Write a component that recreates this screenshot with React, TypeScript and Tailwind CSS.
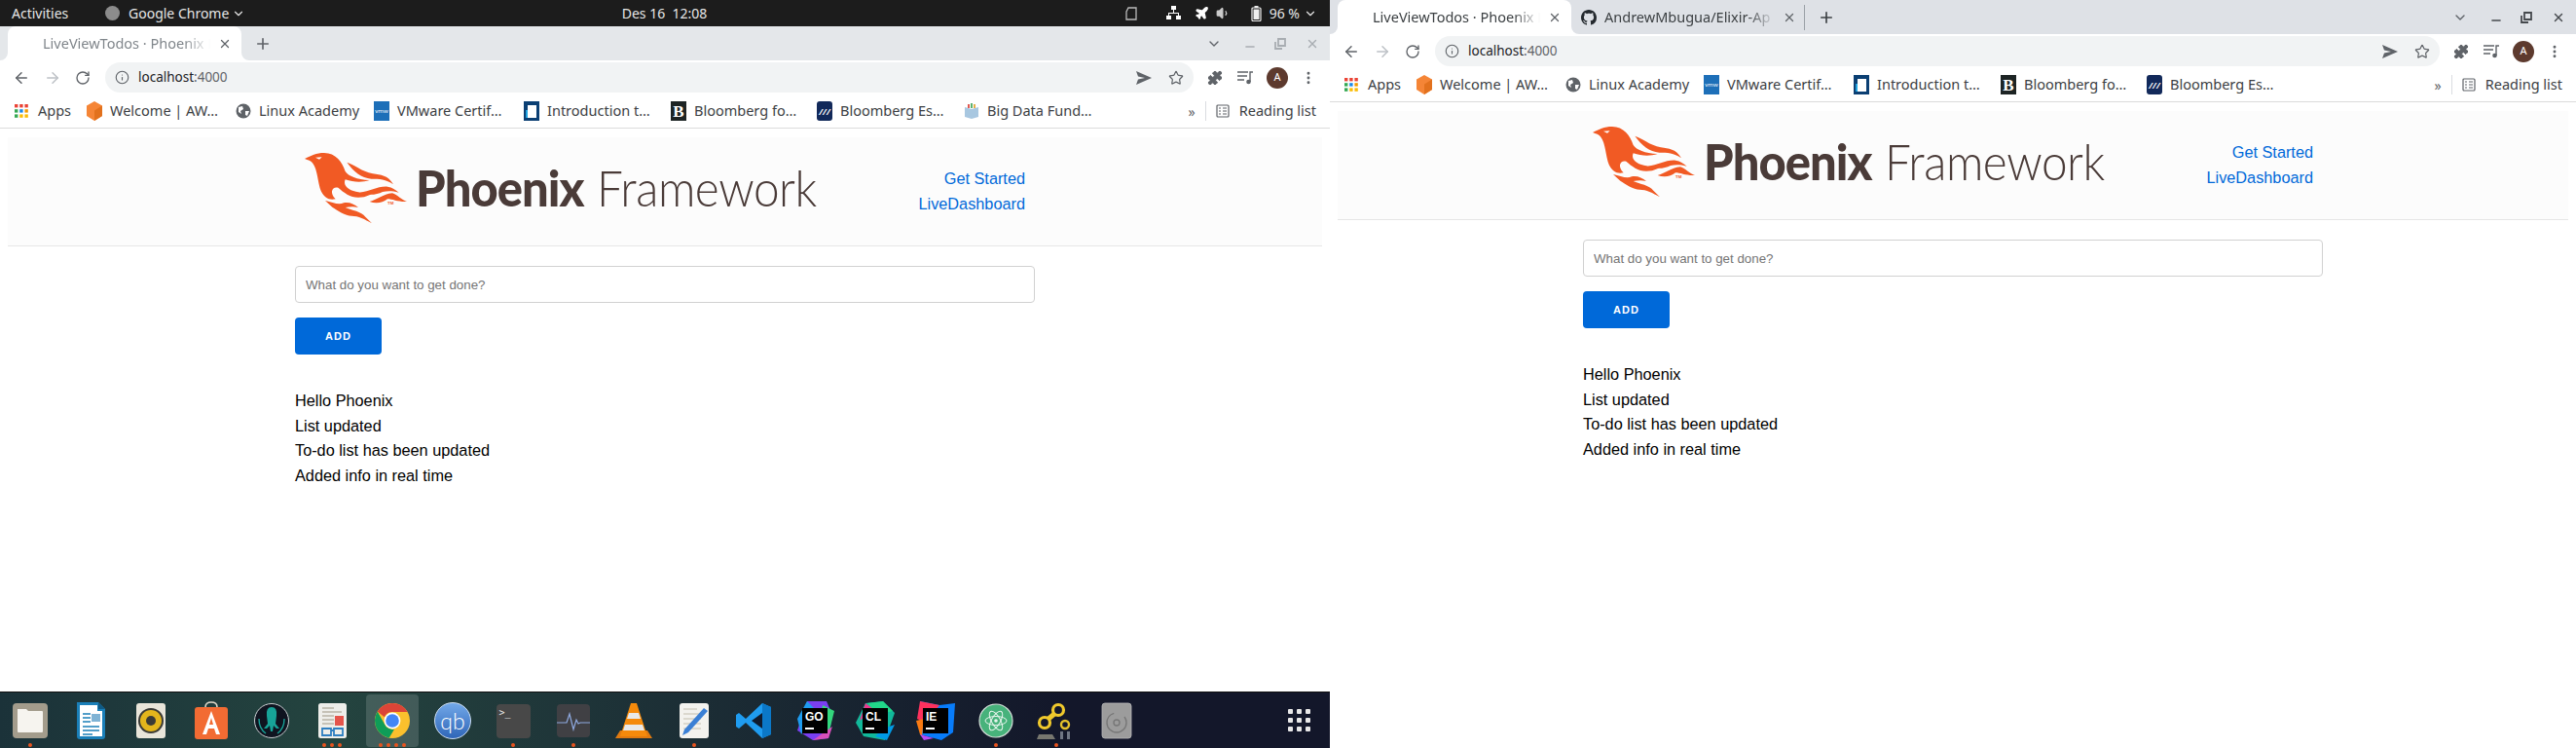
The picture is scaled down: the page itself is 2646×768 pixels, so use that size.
import React from 'react';
import { ArrowLeft, ArrowRight, RotateCw, Info, Star, Plus, X, ChevronDown, Minus, EllipsisVertical, Puzzle, Plane, Volume1 } from 'lucide-react';

const AppsGrid = () => (
  <svg width="14" height="14" viewBox="0 0 14 14" className="shrink-0">
    {['#ea4335', '#ea4335', '#ea4335', '#34a853', '#1a88e8', '#f29900', '#34a853', '#fbbc04', '#fbbc04'].map((c, i) => (
      <rect key={i} x={(i % 3) * 5.2} y={Math.floor(i / 3) * 5.2} width="3.4" height="3.4" fill={c} />
    ))}
  </svg>
);

const HexIcon = () => (
  <svg width="16" height="20" viewBox="0 0 16 20" className="shrink-0">
    <path d="M8 0 16 4.5V15L8 20 0 15V4.5Z" fill="#f58536" />
    <path d="M8 9.5 16 4.5V15L8 20Z" fill="#e2711d" />
  </svg>
);

const GlobeIcon = () => (
  <svg width="16" height="16" viewBox="0 0 16 16" className="shrink-0">
    <circle cx="8" cy="8" r="7.5" fill="#5f6368" />
    <path d="M3 4 7 3 8 6 5 8 6 11 3 9ZM10 8 14 8 12 13 10 12Z" fill="#fff" />
  </svg>
);

const VmwIcon = () => (
  <div className="w-4 h-5 shrink-0 bg-[#1d6fb8] flex items-center justify-center text-[6px] leading-none text-white">vmw</div>
);

const IntroIcon = () => (
  <svg width="16" height="20" viewBox="0 0 16 20" className="shrink-0">
    <rect width="16" height="20" fill="#0b3f73" />
    <path d="M4 4h9v13H2V9h2Z" fill="#fff" />
    <path d="M2 9h2v8H2Z" fill="#1fa3e0" />
  </svg>
);

const BIcon = () => (
  <div className="w-4 h-5 shrink-0 bg-[#1d2424] flex items-center justify-center text-[17px] leading-none font-bold text-white font-['Liberation_Serif',serif]">B</div>
);

const EsIcon = () => (
  <div className="w-4 h-5 shrink-0 rounded-[3px] bg-[#12295a] flex items-center justify-center text-[9px] leading-none italic font-bold text-white">///</div>
);

const BookIcon = () => (
  <svg width="16" height="18" viewBox="0 0 16 18" className="shrink-0">
    <path d="M1 5 8 7 15 5V15L8 17 1 15Z" fill="#a8c7e0" />
    <rect x="4" y="2" width="2" height="4" fill="#e0574f" />
    <rect x="7" y="1" width="2" height="5" fill="#5cb270" />
    <rect x="10" y="2" width="2" height="4" fill="#e6b04a" />
  </svg>
);

const PhoenixBird = () => (
  <svg viewBox="25 25 315 225" className="w-[105px] h-[75px] shrink-0">
    <g fill="#f15a24">
      <path d="M25 46C45 36 60 28 85 28 120 28 140 55 150 85 160 100 185 110 225 112 200 120 175 118 150 110 143 125 155 140 175 145 205 155 230 150 255 135 235 155 215 165 190 165 165 165 145 150 128 135 110 130 100 150 120 170 100 175 85 165 75 145 65 120 65 80 50 60 45 52 35 50 25 46Z" />
      <path d="M155 57C175 62 200 85 235 92 260 97 280 95 298 125 275 108 255 108 230 108 200 105 175 85 155 57Z" />
      <path d="M195 150C225 147 250 130 280 132 295 134 305 142 315 150 295 145 280 145 265 148 245 158 220 160 195 150Z" />
      <path d="M225 178C250 172 265 155 295 152 310 156 325 175 340 178 315 180 295 170 280 170 265 182 245 185 225 178Z" />
      <path d="M88 175C110 180 130 190 145 182 160 178 178 185 190 196 175 192 162 194 150 196 170 205 200 208 212 225L232 245C210 232 190 222 170 222 150 222 125 205 110 195Z" />
    </g>
    <path d="M58 42 78 41 70 48Z" fill="#fff" />
    <text x="280" y="186" fontSize="13" fontWeight="700" fill="#f15a24" fontFamily="Liberation Sans, sans-serif">TM</text>
  </svg>
);

const PhoenixPage = () => (
  <div className="flex-1 bg-white px-2 pt-[9px] font-['Liberation_Sans',sans-serif] text-[16.3px] leading-[25.6px] text-black">
    <div className="h-[112px] bg-[#fcfcfc] border-b border-[#e6e6e6]">
      <div className="w-[760px] mx-auto px-[10px] h-full flex items-center justify-between">
        <div className="flex items-center pb-[6px]">
          <PhoenixBird />
          <div className="ml-[9px] mb-[3px] flex items-baseline gap-[14px] font-['Lato',sans-serif] text-[52px] leading-none text-[#4a3b38]">
            <span className="font-black tracking-[-1px] scale-x-[0.94] origin-left w-[172px]">Phoenix</span>
            <span className="font-light tracking-[-0.5px] scale-x-[0.918] origin-left w-[223px]">Framework</span>
          </div>
        </div>
        <div className="flex flex-col items-end text-[#0069d9] pt-[1px]">
          <a>Get Started</a>
          <a>LiveDashboard</a>
        </div>
      </div>
    </div>
    <div className="w-[760px] mx-auto pt-5">
      <input
        className="block w-full h-[38px] px-[10px] border border-[#d1d1d1] rounded-[4px] text-[13.33px] placeholder:text-[#757575] outline-none"
        placeholder="What do you want to get done?"
      />
      <button className="mt-[15px] w-[89px] h-[38px] rounded-[4px] bg-[#0069d9] text-white text-[11px] font-bold tracking-[1px] leading-[38px]">ADD</button>
      <ul className="mt-[35px]">
        <li>Hello Phoenix</li>
        <li>List updated</li>
        <li>To-do list has been updated</li>
        <li>Added info in real time</li>
      </ul>
    </div>
  </div>
);

const TabTitle = ({ title, dim }: { title: string; dim?: boolean }) => (
  <span className={`flex-1 min-w-0 whitespace-nowrap text-[14.5px] [mask-image:linear-gradient(to_right,black_84%,transparent)] ${dim ? 'text-[#80868b]' : 'text-[#3c4043]'}`}>{title}</span>
);

const Bookmark = ({ icon, label, width }: { icon: React.ReactNode; label: string; width: string }) => (
  <div className={`flex items-center gap-2 shrink-0 ${width}`}>
    <div className="w-4 flex justify-center">{icon}</div>
    <span className="whitespace-nowrap">{label}</span>
  </div>
);

const WindowControls = ({ dim }: { dim?: boolean }) => (
  <div className={`flex items-center h-full ${dim ? 'text-[#a8adb2]' : 'text-[#45494d]'}`}>
    <ChevronDown size={16} strokeWidth={2} className="mr-[22px] text-[#5f6368]" />
    <Minus size={14} strokeWidth={2.5} className="mr-[18px] mt-[6px]" />
    <svg width="12" height="12" viewBox="0 0 12 12" fill="none" stroke="currentColor" strokeWidth="1.8" className="mr-[20px]">
      <path d="M1 4v7h7M4 1h7v7H4Z" />
    </svg>
    <X size={14} strokeWidth={2.5} className="mr-[11px]" />
  </div>
);

const ChromeBars = ({ focused, bookmarks }: { focused: boolean; bookmarks: React.ReactNode }) => {
  const strip = focused ? 'bg-[#dee1e6]' : 'bg-[#e4e7ea]';
  return (
    <div className="shrink-0 font-['Noto_Sans',sans-serif]">
      <div className="h-[35px] flex bg-white">
        <div className={`w-2 rounded-br-[8px] ${strip}`} />
        <div className={strip}>
          <div className="w-[240px] h-full bg-white rounded-t-[8px] flex items-center pl-[36px] pr-[10px] gap-2">
            <TabTitle title="LiveViewTodos · Phoenix F" dim={!focused} />
            <X size={14} strokeWidth={2.2} className="text-[#5f6368] shrink-0" />
          </div>
        </div>
        <div className={`flex-1 flex items-center justify-between rounded-bl-[8px] ${strip}`}>
          <div className="flex items-center">
            {focused && (
              <div className="w-[240px] flex items-center pl-[10px] pr-[8px] gap-[8px] border-r border-[#9aa0a6] h-[26px]">
                <svg width="16" height="16" viewBox="0 0 16 16" fill="#24292e" className="shrink-0">
                  <path d="M8 0C3.58 0 0 3.58 0 8c0 3.54 2.29 6.53 5.47 7.59.4.07.55-.17.55-.38 0-.19-.01-.82-.01-1.49-2.01.37-2.53-.49-2.69-.94-.09-.23-.48-.94-.82-1.13-.28-.15-.68-.52-.01-.53.63-.01 1.08.58 1.23.82.72 1.21 1.87.87 2.33.66.07-.52.28-.87.51-1.07-1.78-.2-3.64-.89-3.64-3.95 0-.87.31-1.59.82-2.15-.08-.2-.36-1.02.08-2.12 0 0 .67-.21 2.2.82.64-.18 1.32-.27 2-.27s1.36.09 2 .27c1.53-1.04 2.2-.82 2.2-.82.44 1.1.16 1.92.08 2.12.51.56.82 1.27.82 2.15 0 3.07-1.87 3.75-3.65 3.95.29.25.54.73.54 1.48 0 1.07-.01 1.93-.01 2.2 0 .21.15.46.55.38A8.01 8.01 0 0 0 16 8c0-4.42-3.58-8-8-8Z" />
                </svg>
                <TabTitle title="AndrewMbugua/Elixir-Ap" />
                <X size={14} strokeWidth={2.2} className="text-[#5f6368] shrink-0" />
              </div>
            )}
            <Plus size={18} strokeWidth={2.2} className={`text-[#3c4043] ${focused ? 'ml-[13px]' : 'ml-[13px] text-[#5f6368]'}`} />
          </div>
          <WindowControls dim={!focused} />
        </div>
      </div>
      <div className="h-[35px] bg-white flex items-center text-[#5f6368]">
        <ArrowLeft size={18} strokeWidth={2} className="ml-[13px]" />
        <ArrowRight size={18} strokeWidth={2} className="ml-[14px] text-[#bdc1c6]" />
        <RotateCw size={16} strokeWidth={2} className="ml-[14px]" />
        <div className="flex-1 h-[31px] ml-[15px] mr-[14px] rounded-full bg-[#f1f3f4] flex items-center pl-[10px] pr-[10px]">
          <Info size={15} strokeWidth={1.8} />
          <span className="ml-[9px] text-[13.5px]"><span className="text-[#202124]">localhost</span>:4000</span>
          <svg width="16" height="14" viewBox="0 0 16 14" fill="currentColor" className="ml-auto"><path d="M0 0 16 7 0 14 2 8.5 9 7 2 5.5Z" /></svg>
          <Star size={16} strokeWidth={1.8} className="ml-[17px]" />
        </div>
        <Puzzle size={16} fill="currentColor" strokeWidth={1.5} className="mr-[15px]" />
        <svg width="17" height="14" viewBox="0 0 17 14" fill="none" stroke="currentColor" strokeWidth="1.4" className="mr-[13px]">
          <path d="M0 1h11M0 5h10M0 9h7M13 11V1h3" />
          <circle cx="11.5" cy="11" r="1.6" fill="currentColor" />
        </svg>
        <div className="w-[22px] h-[22px] rounded-full bg-[#5d3a2e] text-white text-[11px] flex items-center justify-center mr-[13px]">A</div>
        <EllipsisVertical size={16} strokeWidth={2.4} className="mr-[14px]" />
      </div>
      <div className="h-[35px] bg-white border-b border-[#dcdcdc] flex items-center pl-[15px] pr-[14px] text-[14.5px] text-[#3c4043]">
        <div className="flex items-center gap-[10px] w-[74px] shrink-0">
          <AppsGrid />
          <span>Apps</span>
        </div>
        <Bookmark icon={<HexIcon />} label="Welcome | AW…" width="w-[153px]" />
        <Bookmark icon={<GlobeIcon />} label="Linux Academy" width="w-[142px]" />
        <Bookmark icon={<VmwIcon />} label="VMware Certif…" width="w-[154px]" />
        <Bookmark icon={<IntroIcon />} label="Introduction t…" width="w-[151px]" />
        {bookmarks}
        <span className="ml-auto text-[#5f6368] text-[14px] mr-[10px]">»</span>
        <div className="w-px h-[20px] bg-[#dadce0] mr-[10px]" />
        <svg width="14" height="14" viewBox="0 0 14 14" fill="none" stroke="#5f6368" strokeWidth="1.2" className="mr-[10px] shrink-0">
          <rect x="1" y="1" width="12" height="12" rx="1" />
          <path d="M3 4h2M3 7h2M3 10h2M7 4h4M7 7h4M7 10h4" />
        </svg>
        <span>Reading list</span>
      </div>
    </div>
  );
};

const iconDoc = 'w-[44px] h-[44px]';

const FilesIcon = () => (
  <svg viewBox="0 0 44 44" className={iconDoc}>
    <rect x="4" y="4" width="36" height="36" rx="4" fill="#a39c8c" />
    <path d="M9 10h9l2 2h14q1 0 1 1v20q0 1-1 1H10q-1 0-1-1Z" fill="#f6f4ef" />
  </svg>
);

const WriterIcon = () => (
  <svg viewBox="0 0 44 44" className={iconDoc}>
    <path d="M8 3h22l7 7v28q0 3-3 3H11q-3 0-3-3Z" fill="#1a7fb8" />
    <path d="M11 6h18v6h5v26H11Z" fill="#fff" />
    <path d="M30 3l7 7h-7Z" fill="#0f5a85" />
    <path d="M14 15h8M14 19h8M14 23h8M14 28h17M14 32h17M14 36h10" stroke="#1a7fb8" strokeWidth="1.6" />
    <rect x="23" y="15" width="9" height="8" fill="#7fb3d5" />
  </svg>
);

const RhythmIcon = () => (
  <svg viewBox="0 0 44 44" className={iconDoc}>
    <rect x="7" y="4" width="30" height="36" rx="3" fill="#e9e5da" />
    <circle cx="22" cy="22" r="13" fill="#3a3a36" />
    <circle cx="22" cy="22" r="11" fill="#e3b51c" />
    <circle cx="22" cy="22" r="5" fill="#3a3a36" />
  </svg>
);

const SoftwareIcon = () => (
  <svg viewBox="0 0 44 44" className={iconDoc}>
    <path d="M16 8q0-5 6-5t6 5" fill="none" stroke="#ddd6c8" strokeWidth="1.6" />
    <path d="M8 8h28q3 0 3 3v27q0 3-3 3H8q-3 0-3-3V11q0-3 3-3Z" fill="#f26b33" />
    <path d="M22 12 31 36h-4l-2-6h-6l-2 6h-4ZM20 26h4l-2-7Z" fill="#fff" />
  </svg>
);

const KrakenIcon = () => (
  <svg viewBox="0 0 44 44" className={iconDoc}>
    <circle cx="22" cy="22" r="17.5" fill="#0f1420" stroke="#c9ced1" strokeWidth="1" />
    <path d="M22 8q6 0 5 9l-1 8 4 5h-3l-3-3-1 6h-2l-1-6-3 3h-3l4-5-1-8q-1-9 5-9Z" fill="#17a398" />
    <path d="M9 20q0 10 7 15M35 20q0 10-7 15" stroke="#17a398" strokeWidth="1.4" fill="none" />
  </svg>
);

const ReaderIcon = () => (
  <svg viewBox="0 0 44 44" className={iconDoc}>
    <rect x="8" y="4" width="29" height="36" rx="2.5" fill="#eeeeea" />
    <path d="M12 9h12M12 13h20M12 17h12M12 21h12M12 25h12" stroke="#b9b4a6" strokeWidth="1.4" />
    <rect x="25" y="17" width="9" height="10" fill="#e5544b" />
    <path d="M12 30h9v7h-9ZM24 30h9v7h-9ZM21 32h3" fill="none" stroke="#2f7fc1" strokeWidth="1.8" />
  </svg>
);

const ChromeIcon = () => (
  <svg viewBox="0 0 44 44" className={iconDoc}>
    <circle cx="22" cy="22" r="18" fill="#fbc02d" />
    <path d="M22 4a18 18 0 0 1 15.6 9H22a9 9 0 0 0-8.2 5.2L6.7 12.6A18 18 0 0 1 22 4Z" fill="#db4437" />
    <path d="M6.7 12.6 14 25.5A9 9 0 0 0 24 30.7L18.6 39.7A18 18 0 0 1 6.7 12.6Z" fill="#0f9d58" />
    <circle cx="22" cy="22" r="8.4" fill="#fff" />
    <circle cx="22" cy="22" r="6.8" fill="#4285f4" />
  </svg>
);

const QbIcon = () => (
  <div className="w-[38px] h-[38px] my-[3px] rounded-full border border-[#cfe0f5] bg-gradient-to-b from-[#72a8e8] to-[#2f66b8] flex items-center justify-center text-white text-[23px] font-light leading-none font-['Lato',sans-serif]">qb</div>
);

const TerminalIcon = () => (
  <div className="w-[35px] h-[35px] my-[4.5px] rounded-[4px] bg-[#484848] text-[#e8e8e8] text-[10px] leading-none font-['DejaVu_Sans_Mono',monospace] pl-[3px] pt-[4px]">&gt;_</div>
);

const MonitorIcon = () => (
  <svg viewBox="0 0 44 44" className={iconDoc}>
    <rect x="5" y="5" width="34" height="34" rx="4" fill="#404044" />
    <path d="M5 24h10l3-9 4 16 3-10 2 4 2-1h10" fill="none" stroke="#8ea9e0" strokeWidth="1.2" />
  </svg>
);

const VlcIcon = () => (
  <svg viewBox="0 0 44 44" className={iconDoc}>
    <path d="M3 40 8 32h28l5 8Z" fill="#e07a10" />
    <path d="M19 4h6l11 34H8Z" fill="#f58a0b" />
    <path d="M17 14h10l2 6H15ZM13 26h18l2 6H11Z" fill="#e9e9e9" />
  </svg>
);

const EditorIcon = () => (
  <svg viewBox="0 0 44 44" className={iconDoc}>
    <rect x="7" y="4" width="30" height="36" rx="3" fill="#f3f2ee" />
    <path d="M11 10h14M11 15h18M11 20h18M11 25h18M11 30h18" stroke="#d3cfc4" strokeWidth="1.4" />
    <path d="M32 9 36 12 16 34 10 37 12 31Z" fill="#3a7fd5" />
  </svg>
);

const VscodeIcon = () => (
  <svg viewBox="0 0 44 44" className={iconDoc}>
    <path d="M30 4 39 8V36L30 40 13 24 6 30 3 28V16L6 14 13 20Z" fill="#1f9cf0" />
    <path d="M30 14 19 22 30 30Z" fill="#0f1b2e" />
    <path d="M30 4 39 8V36L30 40Z" fill="#0b78c8" />
  </svg>
);

const JetIcon = ({ label, shape }: { label: string; shape: React.ReactNode }) => (
  <div className="relative w-[44px] h-[44px]">
    <svg viewBox="0 0 44 44" className="w-full h-full">{shape}</svg>
    <div className="absolute left-[9px] top-[9px] w-[26px] h-[26px] bg-black text-white text-[12px] font-bold leading-none px-[3px] pt-[3px] font-['Liberation_Sans',sans-serif]">
      {label}
      <div className="w-[9px] h-[2px] bg-white mt-[5px]" />
    </div>
  </div>
);

const GoShape = (
  <>
    <path d="M14 2H34L40 16 36 40 20 42 4 32Z" fill="#7a3ff2" />
    <path d="M4 20 14 2 24 12 8 36Z" fill="#1e9cf0" />
    <path d="M30 6 42 12 36 36 26 30Z" fill="#33d67c" />
    <path d="M20 42 36 40 40 28Z" fill="#d84fbb" />
  </>
);
const ClShape = (
  <>
    <path d="M12 4 30 2 42 14 32 42 10 38 2 24Z" fill="#11b89a" />
    <path d="M14 4 30 2 40 12 24 16Z" fill="#21d789" />
    <path d="M30 30 42 26 34 42 22 38Z" fill="#009ae5" />
    <path d="M12 4 20 10 6 22Z" fill="#ed358c" />
  </>
);
const IeShape = (
  <>
    <path d="M6 2 26 6 42 4 40 34 28 42 6 36Z" fill="#087cfa" />
    <path d="M6 2 26 6 12 24 3 20Z" fill="#fe315d" />
    <path d="M2 22 10 20 8 38 6 36Z" fill="#f97a12" />
    <path d="M6 36 20 40 10 42Z" fill="#b74af7" />
  </>
);

const AtomIcon = () => (
  <svg viewBox="0 0 44 44" className={iconDoc}>
    <circle cx="22" cy="22" r="17" fill="#47b27b" stroke="#d4ded8" strokeWidth="1.2" />
    <g fill="none" stroke="#e9f5ee" strokeWidth="1">
      <ellipse cx="22" cy="22" rx="11" ry="4.5" />
      <ellipse cx="22" cy="22" rx="11" ry="4.5" transform="rotate(60 22 22)" />
      <ellipse cx="22" cy="22" rx="11" ry="4.5" transform="rotate(120 22 22)" />
    </g>
    <circle cx="22" cy="22" r="1.8" fill="#e9f5ee" />
  </svg>
);

const KeysIcon = () => (
  <svg viewBox="0 0 44 44" className={iconDoc}>
    <g fill="none" stroke="#f0c92c" strokeWidth="3.2">
      <circle cx="10" cy="24" r="5.5" />
      <circle cx="24" cy="11" r="5.5" />
      <path d="M14 20 20 15" strokeWidth="5" />
    </g>
    <circle cx="31" cy="26" r="4" fill="none" stroke="#e5c22b" strokeWidth="2.4" />
    <path d="M26 33h3v8h-3ZM33 33h3v8h-3Z" fill="#6f7684" />
    <path d="M4 36h14l3 5H2Z" fill="#77776f" />
  </svg>
);

const DiscIcon = () => (
  <svg viewBox="0 0 44 44" className={iconDoc}>
    <rect x="7" y="4" width="30" height="36" rx="3" fill="#9c9c9c" stroke="#b9b9b9" strokeWidth="0.8" />
    <circle cx="22" cy="24" r="10" fill="none" stroke="#777" strokeWidth="1.4" strokeDasharray="44 12" />
    <circle cx="22" cy="24" r="3" fill="none" stroke="#777" strokeWidth="1.4" />
  </svg>
);

const dockApps: { icon: React.ReactNode; dots: number; active?: boolean }[] = [
  { icon: <FilesIcon />, dots: 1 },
  { icon: <WriterIcon />, dots: 0 },
  { icon: <RhythmIcon />, dots: 0 },
  { icon: <SoftwareIcon />, dots: 0 },
  { icon: <KrakenIcon />, dots: 0 },
  { icon: <ReaderIcon />, dots: 3 },
  { icon: <ChromeIcon />, dots: 4, active: true },
  { icon: <QbIcon />, dots: 0 },
  { icon: <TerminalIcon />, dots: 1 },
  { icon: <MonitorIcon />, dots: 1 },
  { icon: <VlcIcon />, dots: 0 },
  { icon: <EditorIcon />, dots: 1 },
  { icon: <VscodeIcon />, dots: 0 },
  { icon: <JetIcon label="GO" shape={GoShape} />, dots: 0 },
  { icon: <JetIcon label="CL" shape={ClShape} />, dots: 0 },
  { icon: <JetIcon label="IE" shape={IeShape} />, dots: 0 },
  { icon: <AtomIcon />, dots: 1 },
  { icon: <KeysIcon />, dots: 1 },
  { icon: <DiscIcon />, dots: 0 },
];

const Dock = () => (
  <div className="h-[58px] shrink-0 border-t border-[#111] bg-gradient-to-r from-[#1b3239] via-[#24443f] via-25% to-[#13172a] to-80% flex">
    {dockApps.map((app, i) => (
      <div key={i} className="w-[62px] shrink-0 flex justify-center">
        <div className={`w-[54px] flex flex-col items-center mt-[2px] h-[54px] rounded-[4px] pt-[5px] ${app.active ? 'bg-[#ffffff26]' : ''}`}>
          {app.icon}
          <div className="flex gap-[4px] mt-[1px]">
            {Array.from({ length: app.dots }).map((_, d) => (
              <span key={d} className="w-1 h-1 rounded-full bg-[#e9541f]" />
            ))}
          </div>
        </div>
      </div>
    ))}
    <div className="ml-auto mr-[20px] self-center grid grid-cols-3 gap-[4px]">
      {Array.from({ length: 9 }).map((_, i) => (
        <span key={i} className="w-[5px] h-[5px] rounded-[1px] bg-[#e8e8e8]" />
      ))}
    </div>
  </div>
);

const TopBar = () => (
  <div className="h-[27px] shrink-0 bg-[#1c1c1c] text-[#e6e6e6] text-[14px] flex items-center font-['Noto_Sans',sans-serif]">
    <div className="flex-1 flex items-center pl-3">
      <span className="w-[62px] whitespace-nowrap">Activities</span>
      <span className="ml-[34px] w-[15px] h-[15px] rounded-full bg-[#8c8c8c]" />
      <span className="ml-[9px] w-[103px] whitespace-nowrap">Google Chrome</span>
      <ChevronDown size={14} className="ml-[3px]" />
    </div>
    <span className="whitespace-pre">Des 16  12:08</span>
    <div className="flex-1 flex items-center justify-end pr-[13px]">
      <svg width="12" height="14" viewBox="0 0 12 14" fill="none" stroke="#bbb" strokeWidth="1.3" className="mr-[30px]"><path d="M3 1h8v12H1V5Z" /></svg>
      <svg width="15" height="15" viewBox="0 0 15 15" fill="#fff" className="mr-[14px]"><rect x="5" y="0" width="5" height="4" /><rect x="0" y="10" width="5" height="4" /><rect x="10" y="10" width="5" height="4" /><path d="M7 4h1v3h5v3h-1V8H3v2H2V7h5Z" /></svg>
      <Plane size={15} fill="#fff" stroke="#fff" className="mr-[7px]" />
      <Volume1 size={15} stroke="#ccc" fill="#ccc" className="mr-[21px]" />
      <svg width="11" height="16" viewBox="0 0 11 16" className="mr-[8px]"><rect x="3.5" y="0" width="4" height="2" fill="#eee" /><rect x="1" y="2" width="9" height="13.5" rx="1" fill="none" stroke="#eee" strokeWidth="1.2" /><rect x="2.5" y="3.5" width="6" height="10.5" fill="#eee" /></svg>
      <span className="mr-[4px]">96 %</span>
      <ChevronDown size={14} />
    </div>
  </div>
);

const App = () => (
  <div className="w-[2646px] h-[768px] flex overflow-hidden bg-white">
    <div className="w-[1366px] shrink-0 flex flex-col">
      <TopBar />
      <ChromeBars
        focused={false}
        bookmarks={
          <>
            <Bookmark icon={<BIcon />} label="Bloomberg fo…" width="w-[150px]" />
            <Bookmark icon={<EsIcon />} label="Bloomberg Es…" width="w-[151px]" />
            <Bookmark icon={<BookIcon />} label="Big Data Fund…" width="w-[140px]" />
          </>
        }
      />
      <PhoenixPage />
      <Dock />
    </div>
    <div className="flex-1 flex flex-col">
      <ChromeBars
        focused
        bookmarks={
          <>
            <Bookmark icon={<BIcon />} label="Bloomberg fo…" width="w-[150px]" />
            <Bookmark icon={<EsIcon />} label="Bloomberg Es…" width="w-[140px]" />
          </>
        }
      />
      <PhoenixPage />
    </div>
  </div>
);

export default App;
